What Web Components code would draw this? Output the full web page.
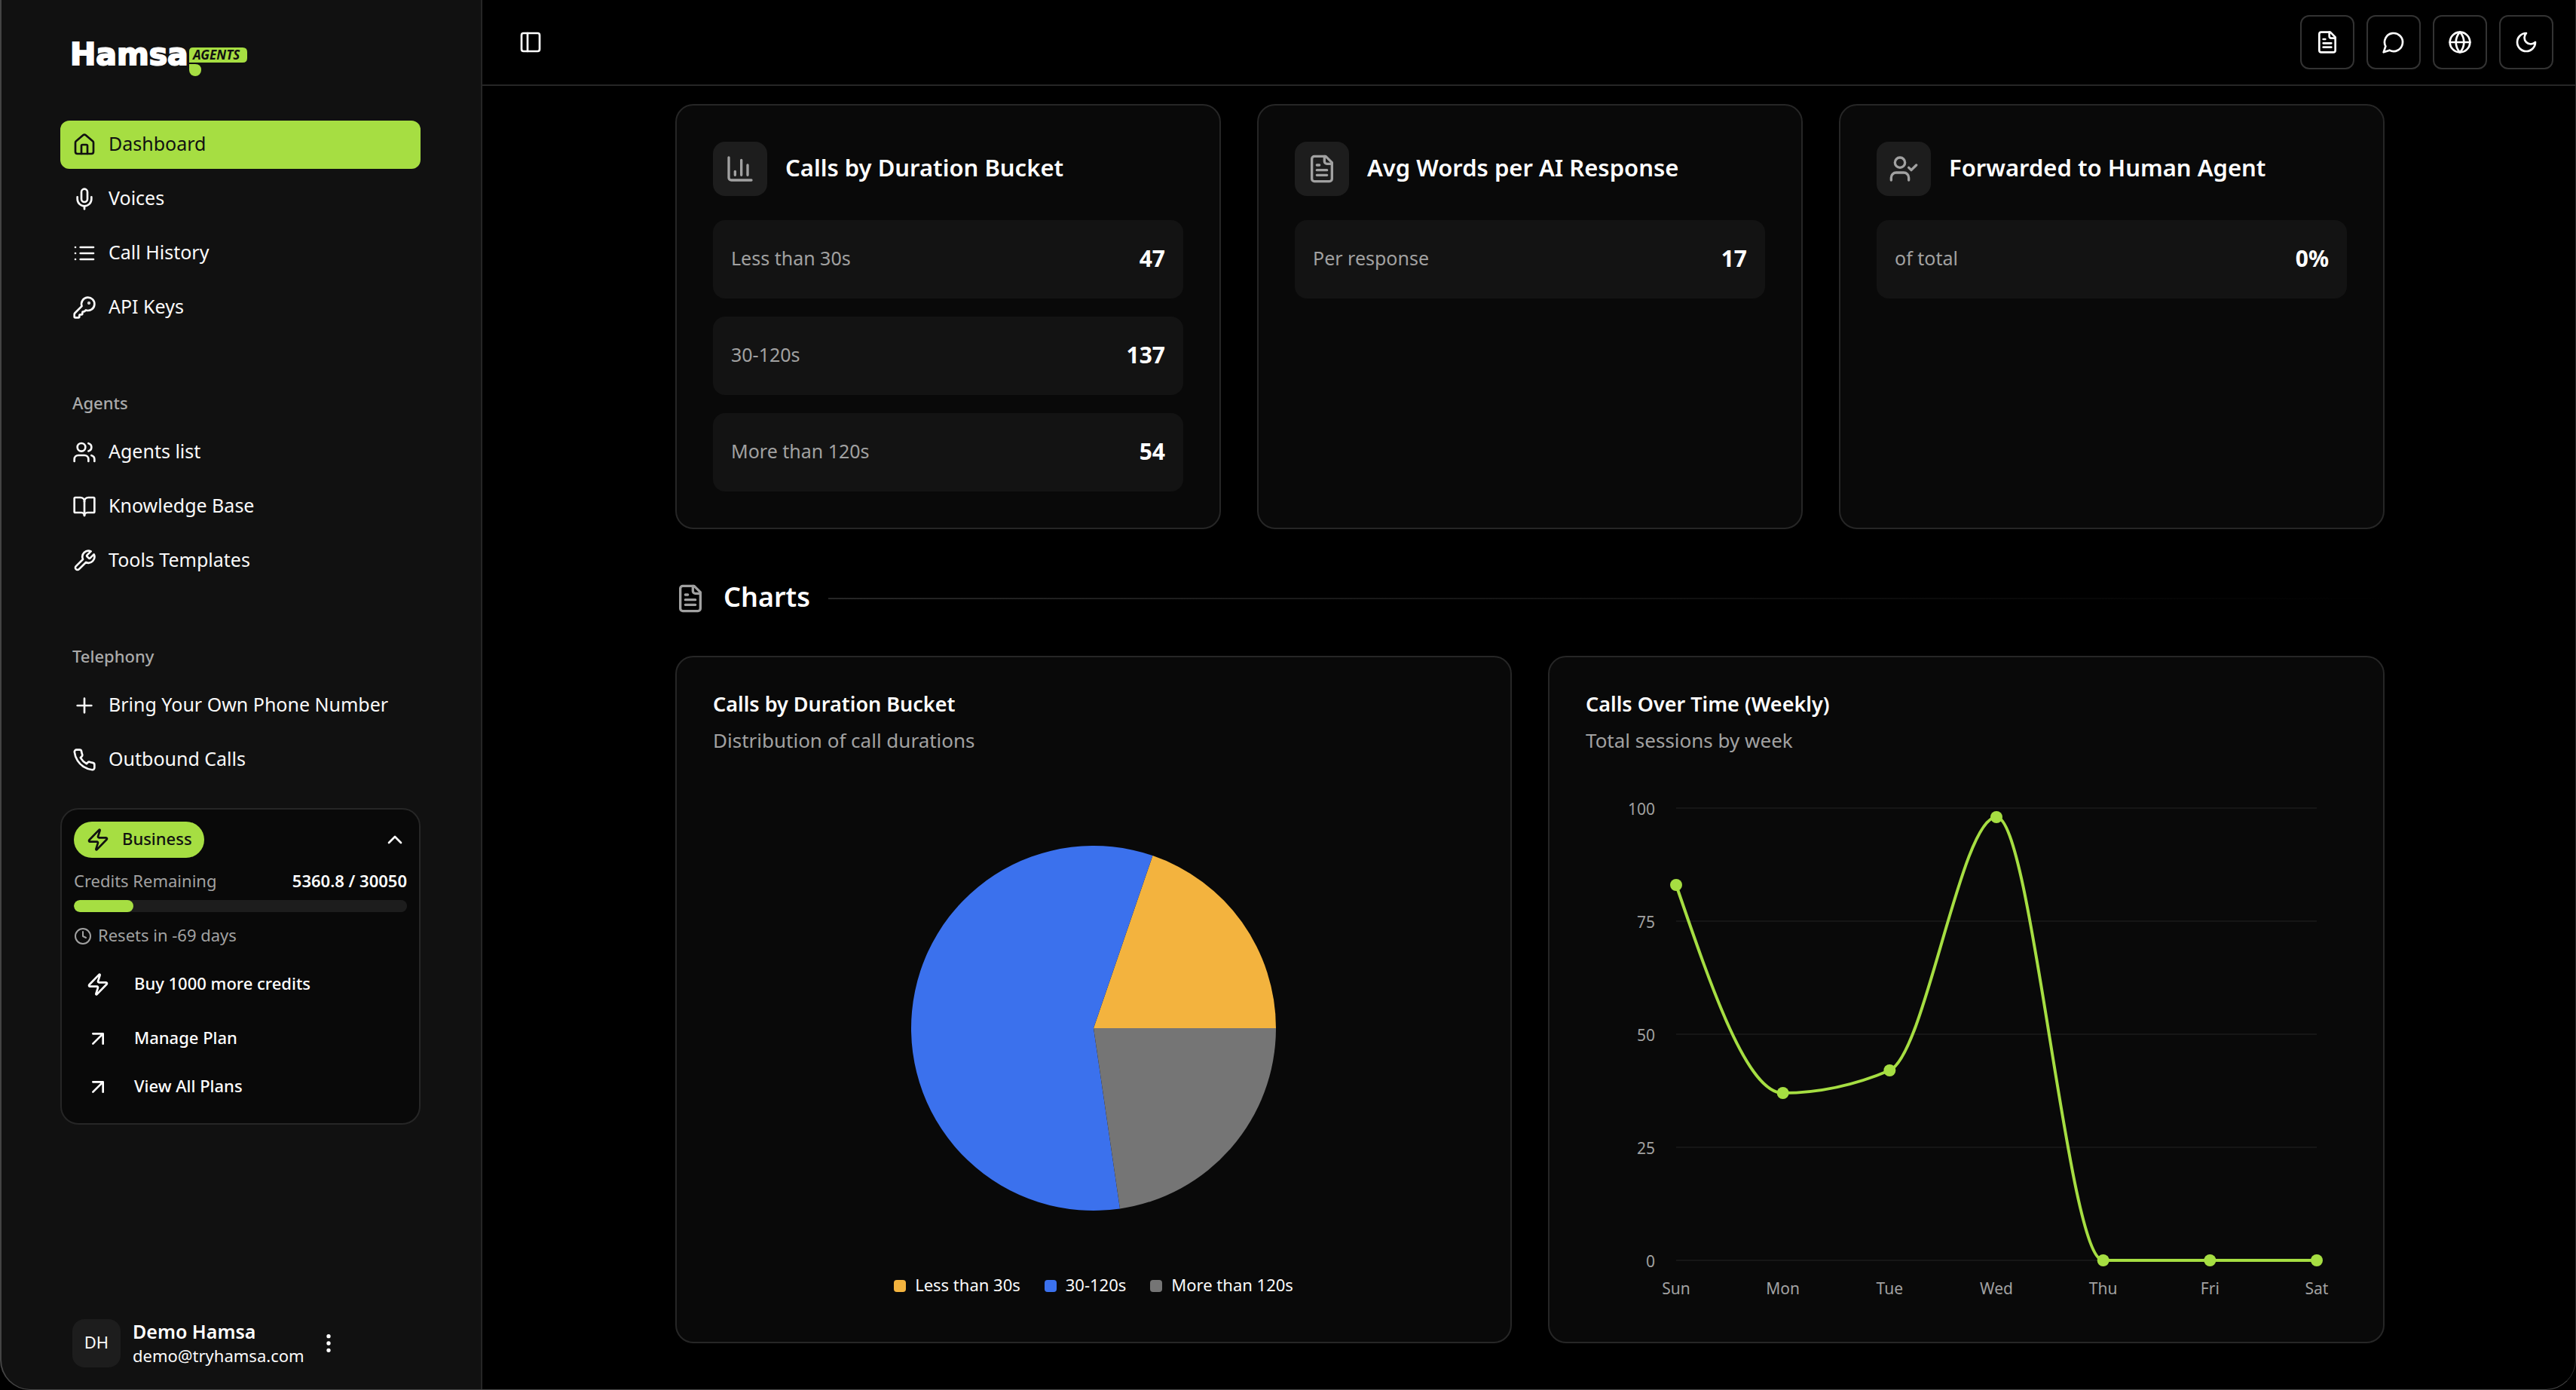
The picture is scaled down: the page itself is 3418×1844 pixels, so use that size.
<!DOCTYPE html>
<html lang="en">
<head>
<meta charset="utf-8">
<title>Hamsa Agents – Dashboard</title>
<style>
  :root {
    --bg: #000000;
    --sidebar: #111111;
    --card: #090909;
    --row: #131313;
    --tile: #1d1d1d;
    --line: #262626;
    --line-strong: #333333;
    --grid: #161616;
    --fg: #fafafa;
    --muted: #a1a1a1;
    --accent: #a6de42;
    --ink: #111111;
    --amber: #f3b33e;
    --blue: #3b71ed;
    --gray: #757575;
  }
  html, body { height: 100%; }
  body {
    margin: 0;
    background: var(--bg);
    color: var(--fg);
    font-family: "Noto Sans", "Open Sans", sans-serif;
    font-size: 25px;
    overflow: hidden;
  }
</style>
</head>
<body>
<app-shell>
  <side-bar slot="sidebar">
    <nav-group>
      <nav-item icon="house" active>Dashboard</nav-item>
      <nav-item icon="mic">Voices</nav-item>
      <nav-item icon="list">Call History</nav-item>
      <nav-item icon="key">API Keys</nav-item>
    </nav-group>
    <nav-group heading="Agents">
      <nav-item icon="users">Agents list</nav-item>
      <nav-item icon="book">Knowledge Base</nav-item>
      <nav-item icon="wrench">Tools Templates</nav-item>
    </nav-group>
    <nav-group heading="Telephony">
      <nav-item icon="plus">Bring Your Own Phone Number</nav-item>
      <nav-item icon="phone">Outbound Calls</nav-item>
    </nav-group>
    <plan-card plan="Business" used="5360.8" total="30050" resets="Resets in -69 days"></plan-card>
    <user-chip slot="footer" initials="DH" name="Demo Hamsa" email="demo@tryhamsa.com"></user-chip>
  </side-bar>

  <top-bar slot="header">
    <tool-button icon="panel" plain label="Toggle sidebar" slot="start"></tool-button>
    <tool-button icon="file" label="Documentation"></tool-button>
    <tool-button icon="message" label="Support chat"></tool-button>
    <tool-button icon="globe" label="Language"></tool-button>
    <tool-button icon="moon" label="Theme"></tool-button>
  </top-bar>

  <card-grid>
    <stat-card icon="chart" heading="Calls by Duration Bucket">
      <stat-row label="Less than 30s" value="47"></stat-row>
      <stat-row label="30-120s" value="137"></stat-row>
      <stat-row label="More than 120s" value="54"></stat-row>
    </stat-card>
    <stat-card icon="file" heading="Avg Words per AI Response">
      <stat-row label="Per response" value="17"></stat-row>
    </stat-card>
    <stat-card icon="usercheck" heading="Forwarded to Human Agent">
      <stat-row label="of total" value="0%"></stat-row>
    </stat-card>
  </card-grid>

  <section-heading icon="file">Charts</section-heading>

  <card-grid>
    <chart-card heading="Calls by Duration Bucket" caption="Distribution of call durations">
      <pie-chart data='[["Less than 30s",47,"--amber"],["30-120s",137,"--blue"],["More than 120s",54,"--gray"]]'></pie-chart>
    </chart-card>
    <chart-card heading="Calls Over Time (Weekly)" caption="Total sessions by week">
      <line-chart data='[["Sun",83],["Mon",37],["Tue",42],["Wed",98],["Thu",0],["Fri",0],["Sat",0]]'></line-chart>
    </chart-card>
  </card-grid>
</app-shell>

<script>
const ICONS = {
  house: '<path d="M15 21v-8a1 1 0 0 0-1-1h-4a1 1 0 0 0-1 1v8"/><path d="M3 10a2 2 0 0 1 .709-1.528l7-6a2 2 0 0 1 2.582 0l7 6A2 2 0 0 1 21 10v9a2 2 0 0 1-2 2H5a2 2 0 0 1-2-2z"/>',
  mic: '<path d="M12 2a3 3 0 0 0-3 3v7a3 3 0 0 0 6 0V5a3 3 0 0 0-3-3Z"/><path d="M19 10v2a7 7 0 0 1-14 0v-2"/><path d="M12 19v3"/>',
  list: '<path d="M3 6h.01M3 12h.01M3 18h.01M8 6h13M8 12h13M8 18h13"/>',
  key: '<path d="M2.586 17.414A2 2 0 0 0 2 18.828V21a1 1 0 0 0 1 1h3a1 1 0 0 0 1-1v-1a1 1 0 0 1 1-1h1a1 1 0 0 0 1-1v-1a1 1 0 0 1 1-1h.172a2 2 0 0 0 1.414-.586l.814-.814a6.5 6.5 0 1 0-4-4z"/><circle cx="16.5" cy="7.5" r=".5" fill="currentColor"/>',
  users: '<path d="M16 21v-2a4 4 0 0 0-4-4H6a4 4 0 0 0-4 4v2"/><circle cx="9" cy="7" r="4"/><path d="M22 21v-2a4 4 0 0 0-3-3.87"/><path d="M16 3.13a4 4 0 0 1 0 7.75"/>',
  book: '<path d="M12 7v14"/><path d="M3 18a1 1 0 0 1-1-1V4a1 1 0 0 1 1-1h5a4 4 0 0 1 4 4 4 4 0 0 1 4-4h5a1 1 0 0 1 1 1v13a1 1 0 0 1-1 1h-6a3 3 0 0 0-3 3 3 3 0 0 0-3-3z"/>',
  wrench: '<path d="M14.7 6.3a1 1 0 0 0 0 1.4l1.6 1.6a1 1 0 0 0 1.4 0l3.77-3.77a6 6 0 0 1-7.94 7.94l-6.91 6.91a2.12 2.12 0 0 1-3-3l6.91-6.91a6 6 0 0 1 7.94-7.94l-3.76 3.76z"/>',
  plus: '<path d="M5 12h14M12 5v14"/>',
  phone: '<path d="M22 16.92v3a2 2 0 0 1-2.18 2 19.79 19.79 0 0 1-8.63-3.07 19.5 19.5 0 0 1-6-6 19.79 19.79 0 0 1-3.07-8.67A2 2 0 0 1 4.11 2h3a2 2 0 0 1 2 1.72 12.84 12.84 0 0 0 .7 2.81 2 2 0 0 1-.45 2.11L8.09 9.91a16 16 0 0 0 6 6l1.27-1.27a2 2 0 0 1 2.11-.45 12.84 12.84 0 0 0 2.81.7A2 2 0 0 1 22 16.92z"/>',
  zap: '<path d="M4 14a1 1 0 0 1-.78-1.63l9.9-10.2a.5.5 0 0 1 .86.46l-1.92 6.02A1 1 0 0 0 13 10h7a1 1 0 0 1 .78 1.63l-9.9 10.2a.5.5 0 0 1-.86-.46l1.92-6.02A1 1 0 0 0 11 14z"/>',
  up: '<path d="m18 15-6-6-6 6"/>',
  clock: '<circle cx="12" cy="12" r="10"/><path d="M12 6v6l4 2"/>',
  arrow: '<path d="M7 7h10v10M7 17 17 7"/>',
  dots: '<circle cx="12" cy="5" r="1"/><circle cx="12" cy="12" r="1"/><circle cx="12" cy="19" r="1"/>',
  panel: '<rect width="18" height="18" x="3" y="3" rx="2"/><path d="M9 3v18"/>',
  file: '<path d="M15 2H6a2 2 0 0 0-2 2v16a2 2 0 0 0 2 2h12a2 2 0 0 0 2-2V7Z"/><path d="M14 2v4a2 2 0 0 0 2 2h4"/><path d="M10 9H8M16 13H8M16 17H8"/>',
  message: '<path d="M7.9 20A9 9 0 1 0 4 16.1L2 22Z"/>',
  globe: '<circle cx="12" cy="12" r="10"/><path d="M12 2a14.5 14.5 0 0 0 0 20 14.5 14.5 0 0 0 0-20"/><path d="M2 12h20"/>',
  moon: '<path d="M12 3a6 6 0 0 0 9 9 9 9 0 1 1-9-9Z"/>',
  chart: '<path d="M3 3v16a2 2 0 0 0 2 2h16M18 17V9M13 17V5M8 17v-3"/>',
  usercheck: '<path d="m16 11 2 2 4-4"/><path d="M16 21v-2a4 4 0 0 0-4-4H6a4 4 0 0 0-4 4v2"/><circle cx="9" cy="7" r="4"/>'
};

/* Registers a custom element whose shadow root is filled by render(host). */
function component(name, css, render) {
  customElements.define(name, class extends HTMLElement {
    constructor() {
      super();
      this.attachShadow({ mode: 'open' });
    }
    connectedCallback() {
      this.shadowRoot.innerHTML =
        `<style>*{box-sizing:border-box}${css}</style>${render(this)}`;
    }
  });
}
const a = (el, n) => el.getAttribute(n) || '';

component('ui-icon', `
  :host { display: inline-flex; flex: none; width: var(--size, 32px); height: var(--size, 32px); }
  svg { width: 100%; height: 100%; fill: none; stroke: currentColor; stroke-width: 2; stroke-linecap: round; stroke-linejoin: round; }
`, el => `<svg viewBox="0 0 24 24" aria-hidden="true">${ICONS[a(el, 'name')]}</svg>`);

component('app-shell', `
  :host { display: grid; grid-template-columns: 640px minmax(0, 1fr); height: 100vh; position: relative; overflow: hidden; }
  .page { display: flex; flex-direction: column; min-width: 0; }
  main { flex: 1; min-height: 0; overflow: hidden; padding: 24px 254px 60px 256px; }
  .frame { position: absolute; inset: -60px 0 0 0; border: 2px solid #444444; border-right: 1px solid #2a2a2a; border-bottom-width: 1px; border-radius: 0 0 40px 40px; box-shadow: 0 0 0 40px #000; pointer-events: none; }
`, () => `
  <slot name="sidebar"></slot>
  <div class="page"><slot name="header"></slot><main><slot></slot></main></div>
  <div class="frame"></div>
`);

component('brand-logo', `
  :host { display: block; }
  svg { display: block; width: 248px; height: 72px; }
  .word { font: 700 41px "DejaVu Sans", sans-serif; fill: #fff; stroke: #fff; stroke-width: 2; }
  .tag { font: italic 700 17px "Noto Sans", sans-serif; fill: #111; }
`, () => `
  <svg viewBox="0 0 248 72" role="img" aria-label="Hamsa Agents">
    <text class="word" x="5" y="50">Hamsa</text>
    <path d="M163 32q0-5 5-5h66q6 0 6 6v8q0 6-6 6h-71z" fill="#a6de42"/>
    <path d="M163 49h8q8 0 8 8a8 8 0 0 1-16 0z" fill="#a6de42"/>
    <text class="tag" x="168" y="43">AGENTS</text>
  </svg>
`);

component('side-bar', `
  :host { display: flex; flex-direction: column; background: var(--sidebar); border-right: 2px solid var(--line); padding: 36px 80px 30px; box-sizing: border-box; min-height: 0; }
  .brand { padding: 0 8px 52px; }
  .menu { display: flex; flex-direction: column; gap: 64px; flex: 1; }
  ::slotted(plan-card) { margin-top: -32px; }
  .foot { padding: 0 16px; }
`, () => `
  <brand-logo class="brand"></brand-logo>
  <div class="menu"><slot></slot></div>
  <div class="foot"><slot name="footer"></slot></div>
`);

component('nav-group', `
  :host { display: block; }
  h2 { margin: 0; padding: 0 16px 4px; font-size: 22px; font-weight: 500; line-height: 60px; color: #aaaaaa; }
  nav { display: flex; flex-direction: column; gap: 8px; }
`, el => `${a(el, 'heading') ? `<h2>${a(el, 'heading')}</h2>` : ''}<nav aria-label="${a(el, 'heading') || 'Main'}"><slot></slot></nav>`);

component('nav-item', `
  :host { display: block; }
  a { display: flex; align-items: center; gap: 16px; height: 64px; padding: 0 16px; border-radius: 12px; color: var(--fg); text-decoration: none; font-size: 25px; line-height: 32px; white-space: nowrap; }
  span { padding-bottom: 4px; }
  :host([active]) a { background: var(--accent); color: var(--ink); }
`, el => `<a href="#"${el.hasAttribute('active') ? ' aria-current="page"' : ''}><ui-icon name="${a(el, 'icon')}"></ui-icon><span><slot></slot></span></a>`);

component('plan-card', `
  :host { display: flex; flex-direction: column; background: var(--card); border: 2px solid var(--line); border-radius: 24px; padding: 16px; font-size: 22px; line-height: 28px; box-sizing: border-box; }
  .top, .credits, .resets, a { display: flex; align-items: center; }
  .top, .credits { justify-content: space-between; }
  .pill { display: flex; align-items: center; gap: 16px; height: 48px; padding: 0 16px; border-radius: 24px; background: var(--accent); color: var(--ink); font-weight: 500; }
  button { display: flex; padding: 0; border: 0; background: none; color: inherit; }
  .credits { margin: 16px 0 12px; color: var(--muted); }
  .credits b { color: #fff; font-weight: 600; }
  progress { display: block; appearance: none; width: 100%; height: 16px; border: 0; border-radius: 8px; overflow: hidden; background: var(--tile); }
  progress::-webkit-progress-bar { background: #1d1d1d; border-radius: 8px; }
  progress::-webkit-progress-value { background: #a6de42; border-radius: 8px; }
  .resets { --size: 24px; gap: 8px; height: 32px; margin: 16px 0; color: var(--muted); }
  a { gap: 32px; height: 64px; padding: 0 16px; color: #fff; font-weight: 500; text-decoration: none; }
  .buy { margin-bottom: 8px; }
  span { padding-bottom: 4px; }
`, el => `
  <div class="top">
    <div class="pill"><ui-icon name="zap"></ui-icon><span>${a(el, 'plan')}</span></div>
    <button type="button" aria-label="Collapse plan details"><ui-icon name="up"></ui-icon></button>
  </div>
  <div class="credits"><label for="credits">Credits Remaining</label><b>${a(el, 'used')} / ${a(el, 'total')}</b></div>
  <progress id="credits" value="${a(el, 'used')}" max="${a(el, 'total')}"></progress>
  <div class="resets"><ui-icon name="clock"></ui-icon><span>${a(el, 'resets')}</span></div>
  <a class="buy" href="#"><ui-icon name="zap"></ui-icon><span>Buy 1000 more credits</span></a>
  <a href="#"><ui-icon name="arrow"></ui-icon><span>Manage Plan</span></a>
  <a href="#"><ui-icon name="arrow"></ui-icon><span>View All Plans</span></a>
`);

component('user-chip', `
  :host { display: flex; align-items: center; gap: 16px; line-height: 32px; font-size: 22px; }
  .avatar { display: grid; place-items: center; width: 64px; height: 64px; padding-bottom: 4px; border-radius: 16px; background: var(--tile); }
  b { display: block; font-size: 25px; font-weight: 600; color: #fff; }
  .who span { display: block; }
  button { display: flex; padding: 0; border: 0; background: none; color: #fff; }
`, el => `
  <div class="avatar">${a(el, 'initials')}</div>
  <div class="who"><b>${a(el, 'name')}</b><span>${a(el, 'email')}</span></div>
  <button type="button" aria-label="Account menu"><ui-icon name="dots"></ui-icon></button>
`);

component('top-bar', `
  :host { display: flex; justify-content: space-between; align-items: center; height: 114px; padding: 0 30px 0 48px; border-bottom: 2px solid var(--line); box-sizing: border-box; flex: none; }
  .tools { display: flex; gap: 16px; }
`, () => `<slot name="start"></slot><div class="tools"><slot></slot></div>`);

component('tool-button', `
  :host { display: block; }
  button { display: grid; place-items: center; width: 72px; height: 72px; padding: 0; border: 2px solid var(--line-strong); border-radius: 12px; background: #000; color: #fff; }
  :host([plain]) button { width: 32px; height: 32px; border: 0; }
`, el => `<button type="button" aria-label="${a(el, 'label')}"><ui-icon name="${a(el, 'icon')}"></ui-icon></button>`);

component('card-grid', `
  :host { display: grid; grid-auto-flow: column; grid-auto-columns: minmax(0, 1fr); gap: 48px; }
`, () => `<slot></slot>`);

component('stat-card', `
  :host { display: flex; flex-direction: column; gap: 24px; padding: 48px; border: 2px solid var(--line); border-radius: 24px; background: var(--card); box-sizing: border-box; }
  header { display: flex; align-items: center; gap: 24px; margin-bottom: 8px; }
  .tile { --size: 40px; display: grid; place-items: center; width: 72px; height: 72px; border-radius: 16px; background: var(--tile); color: var(--muted); }
  h3 { margin: 0; padding-bottom: 4px; font-size: 31px; font-weight: 600; line-height: 40px; color: #fff; }
`, el => `
  <header><div class="tile"><ui-icon name="${a(el, 'icon')}"></ui-icon></div><h3>${a(el, 'heading')}</h3></header>
  <slot></slot>
`);

component('stat-row', `
  :host { display: flex; align-items: center; justify-content: space-between; height: 104px; padding: 0 24px 4px; border-radius: 16px; background: var(--row); box-sizing: border-box; }
  span { font-size: 25px; color: var(--muted); }
  b { font-size: 30px; font-weight: 700; color: #fff; }
`, el => `<span>${a(el, 'label')}</span><b>${a(el, 'value')}</b>`);

component('section-heading', `
  :host { --size: 40px; display: flex; align-items: center; gap: 24px; margin: 68px 0 52px; color: var(--muted); }
  h2 { margin: 0; padding-bottom: 4px; font-size: 36px; font-weight: 600; line-height: 44px; color: #fff; }
  i { flex: 1; height: 2px; background: linear-gradient(to right, var(--line), transparent); }
`, el => `<ui-icon name="${a(el, 'icon')}"></ui-icon><h2><slot></slot></h2><i></i>`);

component('chart-card', `
  :host { display: block; padding: 48px; border: 2px solid var(--line); border-radius: 24px; background: var(--card); box-sizing: border-box; }
  h3 { margin: 0 0 16px; font-size: 27px; font-weight: 600; line-height: 28px; color: #fff; }
  p { margin: 0 0 32px; font-size: 26px; line-height: 36px; color: var(--muted); }
`, el => `<h3>${a(el, 'heading')}</h3><p>${a(el, 'caption')}</p><slot></slot>`);

component('pie-chart', `
  :host { display: block; }
  svg { display: block; width: 100%; }
  ul { display: flex; justify-content: center; gap: 32px; margin: 16px 0 0; padding: 0 0 12px; list-style: none; font-size: 22px; line-height: 24px; }
  li { display: flex; align-items: center; gap: 12px; }
  span { padding-bottom: 4px; }
  i { width: 16px; height: 16px; border-radius: 4px; }
`, el => {
  const data = JSON.parse(a(el, 'data'));
  const total = data.reduce((s, d) => s + d[1], 0);
  const cx = 505, cy = 332, r = 242;
  const at = t => `${cx + r * Math.cos(t)} ${cy - r * Math.sin(t)}`;
  let t = 0;
  const slices = data.map(([label, v, color]) => {
    const from = t;
    t += v / total * Math.PI * 2;
    return `<path fill="var(${color})" d="M${cx} ${cy}L${at(from)}A${r} ${r} 0 ${t - from > Math.PI ? 1 : 0} 0 ${at(t)}Z"/>`;
  });
  return `
    <svg viewBox="0 0 1010 644" role="img" aria-label="Calls by duration">${slices.join('')}</svg>
    <ul>${data.map(d => `<li><i style="background:var(${d[2]})"></i><span>${d[0]}</span></li>`).join('')}</ul>`;
});

component('line-chart', `
  :host { display: block; }
  svg { display: block; width: 100%; }
  text { font-size: 21px; fill: var(--muted); }
  .grid { stroke: var(--grid); stroke-width: 2; }
  .curve { fill: none; stroke: var(--accent); stroke-width: 4; }
  circle { fill: var(--accent); }
`, el => {
  const data = JSON.parse(a(el, 'data'));
  const x0 = 120, x1 = 970, base = 640, unit = 6;
  const pts = data.map((d, i) => [x0 + (x1 - x0) * i / (data.length - 1), base - d[1] * unit]);
  const n = pts.length;
  const step = pts[1][0] - pts[0][0];
  /* Monotone cubic interpolation: tangents are limited so the curve never overshoots a point. */
  const slope = i => (pts[i + 1][1] - pts[i][1]) / step;
  const m = pts.map((_, i) => {
    if (i === 0 || i === n - 1) return null;
    const s0 = slope(i - 1), s1 = slope(i);
    return (Math.sign(s0) + Math.sign(s1)) * Math.min(Math.abs(s0), Math.abs(s1), Math.abs(s0 + s1) / 4) || 0;
  });
  m[0] = (3 * slope(0) - m[1]) / 2;
  m[n - 1] = (3 * slope(n - 2) - m[n - 2]) / 2;
  let d = `M${pts[0]}`;
  for (let i = 0; i < n - 1; i++) {
    const [ax, ay] = pts[i], [bx, by] = pts[i + 1], k = step / 3;
    d += `C${ax + k} ${ay + m[i] * k} ${bx - k} ${by - m[i + 1] * k} ${bx} ${by}`;
  }
  const rows = [100, 75, 50, 25, 0].map(v => {
    const y = base - v * unit;
    return `<path class="grid" d="M${x0} ${y}H${x1}"/><text x="92" y="${y + 9}" text-anchor="end">${v}</text>`;
  });
  return `
    <svg viewBox="0 0 1010 700" role="img" aria-label="Sessions per weekday">
      ${rows.join('')}
      ${pts.map((p, i) => `<text x="${p[0]}" y="685" text-anchor="middle">${data[i][0]}</text>`).join('')}
      <path class="curve" d="${d}"/>
      ${pts.map(p => `<circle cx="${p[0]}" cy="${p[1]}" r="8"/>`).join('')}
    </svg>`;
});
</script>
</body>
</html>
